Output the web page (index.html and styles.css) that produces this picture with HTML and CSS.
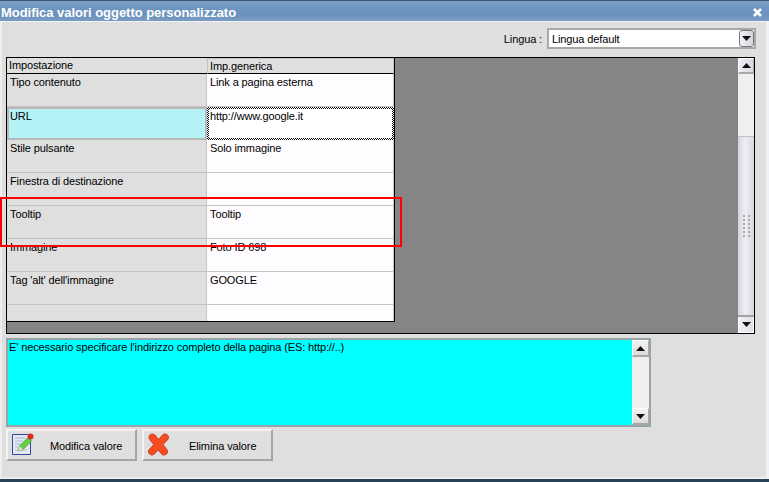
FILE: index.html
```html
<!DOCTYPE html>
<html lang="it">
<head>
<meta charset="utf-8">
<title>Modifica valori oggetto personalizzato</title>
<link rel="stylesheet" href="styles.css">
</head>
<body>
<div class="window">
  <div class="titlebar">
    <span class="title">Modifica valori oggetto personalizzato</span>
    <span class="close"><svg width="11" height="11" viewBox="0 0 11 11"><path d="M2 2 L9 9 M9 2 L2 9" stroke="#fff" stroke-width="2.6" fill="none"/></svg></span>
  </div>
  <div class="content">
    <div class="lang-row">
      <span class="lang-label">Lingua :</span>
      <div class="select">
        <span class="select-text">Lingua default</span>
        <span class="select-btn"><svg width="9" height="5" viewBox="0 0 9 5"><path d="M0 0H9L4.5 5Z" fill="#111"/></svg></span>
      </div>
    </div>
    <div class="grid-frame">
      <div class="table">
        <div class="head-a">Impostazione</div>
        <div class="head-b">Imp.generica</div>
        <div class="name">Tipo contenuto</div><div class="val">Link a pagina esterna</div>
        <div class="name name-sel">URL</div><div class="val val-sel">http://www.google.it</div>
        <div class="name">Stile pulsante</div><div class="val">Solo immagine</div>
        <div class="name">Finestra di destinazione</div><div class="val"></div>
        <div class="name">Tooltip</div><div class="val">Tooltip</div>
        <div class="name">Immagine</div><div class="val">Foto ID 698</div>
        <div class="name">Tag 'alt' dell'immagine</div><div class="val">GOOGLE</div>
        <div class="name blank"></div><div class="val blank"></div>
      </div>
      <div class="grid-fill"></div>
      <div class="vscroll">
        <span class="sb-btn"><svg width="9" height="5" viewBox="0 0 9 5"><path d="M0 5H9L4.5 0Z" fill="#111"/></svg></span>
        <span class="sb-track"></span>
        <span class="sb-thumb"><span class="grip"></span></span>
        <span class="sb-btn sb-btn-down"><svg width="9" height="5" viewBox="0 0 9 5"><path d="M0 0H9L4.5 5Z" fill="#111"/></svg></span>
      </div>
    </div>
    <div class="help">
      <div class="help-text">E' necessario specificare l'indirizzo completo della pagina (ES: http://..)</div>
      <div class="help-scroll">
        <span class="hs-btn"><svg width="9" height="5" viewBox="0 0 9 5"><path d="M0 5H9L4.5 0Z" fill="#111"/></svg></span>
        <span class="hs-track"></span>
        <span class="hs-btn"><svg width="9" height="5" viewBox="0 0 9 5"><path d="M0 0H9L4.5 5Z" fill="#111"/></svg></span>
      </div>
    </div>
    <div class="actions">
      <div class="btn btn-edit">
        <svg class="ico-edit" width="22" height="22" viewBox="0 0 22 22">
          <path d="M.5 1.5H18.5V21.5H.5Z" fill="#e4e9f8" stroke="#38479c"/>
          <path d="M3 5H13M3 8H11M3 11H9M3 14H7M3 17H15" stroke="#aeb7d4"/>
          <path d="M6 18L7.5 13L16 4.5L19.5 8L11 16.5Z" fill="#66d043" stroke="#3f9a35" stroke-width=".8"/>
          <path d="M6 18L7.5 13L10.8 16.5Z" fill="#eee2bc"/>
          <circle cx="18.5" cy="3.5" r="3" fill="#d8301c"/>
        </svg>
        <span class="btn-label">Modifica valore</span>
      </div>
      <div class="btn btn-del">
        <svg class="ico-del" width="23" height="23" viewBox="0 0 23 23">
          <path d="M5.5 4.5L17 18.5M18 4.5L5 18.5" stroke="#c9381a" stroke-width="7.6" stroke-linecap="round" fill="none"/>
          <path d="M5.5 4.5L17 18.5M18 4.5L5 18.5" stroke="#f74c20" stroke-width="6.2" stroke-linecap="round" fill="none"/>
        </svg>
        <span class="btn-label">Elimina valore</span>
      </div>
    </div>
  </div>
  <div class="bottom-edge"></div>
  <div class="highlight"></div>
</div>
</body>
</html>
```
FILE: styles.css
```css
* { box-sizing: border-box; }
html, body { margin: 0; padding: 0; }
body {
  font-family: "Liberation Sans", sans-serif;
  font-size: 11px;
  letter-spacing: -0.12px;
  color: #000;
  background: #dfdfdf;
}
.window {
  position: relative;
  width: 769px;
  height: 482px;
  display: flex;
  flex-direction: column;
  overflow: hidden;
  background: #dfdfdf;
}
.titlebar {
  height: 22px;
  flex: none;
  display: flex;
  align-items: center;
  justify-content: space-between;
  padding: 3px 6px 0 1px;
  border-top: 1px solid #3c5878;
  border-bottom: 1px solid #f0f2f6;
  background: linear-gradient(#7f9fc6, #6d95c0 40%, #6a92bd 70%, #7b9cc4);
}
.title {
  color: #fff;
  font-family: "Liberation Sans", sans-serif;
  font-weight: bold;
  font-size: 13px;
  letter-spacing: -0.03px;
}
.close {
  width: 11px;
  height: 11px;
  display: flex;
}
.content {
  flex: 1;
  min-height: 0;
  padding: 0 14px 0 4px;
  border-left: 2px solid #eeeeee;
  border-right: 3px solid #edf0f7;
  display: flex;
  flex-direction: column;
}
.lang-row {
  height: 21px;
  margin-top: 6px;
  margin-right: -4px;
  display: flex;
  justify-content: flex-end;
  align-items: center;
  gap: 5px;
}
.select {
  width: 209px;
  height: 21px;
  background: #fff;
  border: 2px solid #a8a8a8;
  display: flex;
  align-items: center;
  justify-content: space-between;
  padding: 0 0 0 3px;
}
.select-btn {
  width: 15px;
  height: 17px;
  border: 1px solid #777;
  border-radius: 3px;
  background: linear-gradient(90deg, #f2f2f6, #d4d4de);
  display: flex;
  align-items: center;
  justify-content: center;
}
.grid-frame {
  margin-top: 8px;
  width: 749px;
  height: 277px;
  flex: none;
  border: 1px solid #000;
  background: #868486;
  display: flex;
}
.table {
  width: 388px;
  height: 264px;
  flex: none;
  display: grid;
  grid-template-columns: 200px 187px;
  grid-template-rows: 16px repeat(7, 33px) 16px;
  border-right: 1px solid #000;
  border-bottom: 1px solid #000;
  background: #fff;
}
.head-a, .head-b {
  background: #dfdfdf;
  border-bottom: 1px solid #000;
  padding: 0 2px;
  line-height: 15px;
  white-space: nowrap;
}
.head-b {
  border-top: 1px solid #c4c4c4;
  border-left: 1px solid #c4c4c4;
  border-right: 1px solid #c4c4c4;
  line-height: 14px;
}
.name, .val {
  padding: 1px 3px 0;
  line-height: 14px;
  white-space: nowrap;
  border-bottom: 1px solid #c4c4c4;
}
.name {
  background: #dfdfdf;
  border-right: 1px solid #c4c4c4;
}
.val {
  background: #fffcff;
  border-right: 1px solid #c4c4c4;
}
.name-sel {
  background: #b5f2f5;
  border: 2px solid #b8b8b8;
  padding: 0 1px;
}
.val-sel {
  border: 2px solid transparent;
  background:
    linear-gradient(#fff, #fff) padding-box,
    repeating-conic-gradient(#111 0 25%, #fff 0 50%) 0 0 / 2px 2px border-box;
  padding: 0 1px;
}
.blank { border-bottom: 0; }
.grid-fill { flex: 1; }
.vscroll {
  width: 16px;
  flex: none;
  display: flex;
  flex-direction: column;
}
.sb-btn, .hs-btn {
  flex: none;
  height: 16px;
  display: flex;
  align-items: center;
  justify-content: center;
  background: linear-gradient(90deg, #ecedf2, #dadae4);
  border: 1px solid #a8a8a8;
  border-bottom-width: 2px;
  border-top-color: #fff;
  border-left-color: #fff;
}
.sb-btn-down {
  border: 1px solid #fff;
  border-top: 0;
  background: linear-gradient(90deg, #f0f0f4, #e0e0e8);
}
.sb-track {
  height: 62px;
  flex: none;
  background: #efefef;
}
.sb-thumb {
  flex: 1;
  display: flex;
  align-items: center;
  justify-content: center;
  background: linear-gradient(90deg, #d4d4e0, #eeeef3 45%, #d8d8e2);
  border-bottom: 2px solid #a4a4a8;
  border-top: 1px solid #c0c0c8;
}
.grip {
  width: 7px;
  height: 23px;
  margin-left: 1px;
  background: repeating-linear-gradient(#aaa 0 2px, transparent 2px 4px);
  -webkit-mask: repeating-linear-gradient(90deg, #000 0 2px, transparent 2px 5px);
  mask: repeating-linear-gradient(90deg, #000 0 2px, transparent 2px 5px);
}
.help {
  margin-top: 4px;
  width: 645px;
  height: 89px;
  flex: none;
  border: 2px solid #98a4a4;
  background: #00ffff;
  display: flex;
}
.help-text {
  flex: 1;
  padding: 0 1px;
  line-height: 14px;
  white-space: nowrap;
}
.help-scroll {
  width: 17px;
  flex: none;
  display: flex;
  flex-direction: column;
}
.hs-btn {
  height: 17px;
  background: linear-gradient(#f2f2f2, #dcdcdc);
}
.hs-track {
  flex: 1;
  background: #efefef;
}
.actions {
  margin-top: 2px;
  display: flex;
  gap: 5px;
}
.btn {
  width: 131px;
  height: 32px;
  background: #dfdfdf;
  border: 2px solid #a4a4a4;
  border-top-color: #f4f4f4;
  border-left-color: #f4f4f4;
  display: flex;
  align-items: center;
}
.btn-edit { padding-left: 4px; }
.btn-del { padding-left: 3px; }
.ico-edit { margin-top: -2px; flex: none; }
.ico-del { margin-top: -2px; flex: none; }
.btn-label { margin-top: 1px; }
.btn-edit .btn-label { margin-left: 16px; }
.btn-del .btn-label { margin-left: 19px; }
.bottom-edge {
  height: 5px;
  flex: none;
  border-top: 2px solid #eeeeee;
  background: #2a4258;
}
.highlight {
  position: absolute;
  left: 0;
  top: 197px;
  width: 402px;
  height: 50px;
  border: 2px solid #f00;
}
```
